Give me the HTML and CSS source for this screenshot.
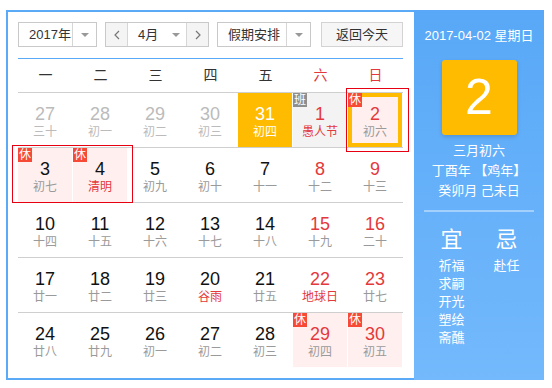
FILE: index.html
```html
<!DOCTYPE html>
<html lang="zh-CN">
<head>
    <meta charset="UTF-8">
    <title>万年历</title>
    <link rel="stylesheet" href="styles.css">
</head>
<body>
    <div class="calendar">
        <div class="main">
            <div class="toolbar">
                <div class="select year">
                    <span class="value">2017年</span>
                    <span class="arrow"><i class="caret"></i></span>
                </div>
                <div class="select month">
                    <span class="nav prev">
                        <svg width="6" height="10" viewBox="0 0 6 10"><path d="M5 1 L1 5 L5 9" fill="none" stroke="#777" stroke-width="1.2"/></svg>
                    </span>
                    <span class="value">4月</span>
                    <span class="caret-box"><i class="caret"></i></span>
                    <span class="nav next">
                        <svg width="6" height="10" viewBox="0 0 6 10"><path d="M1 1 L5 5 L1 9" fill="none" stroke="#777" stroke-width="1.2"/></svg>
                    </span>
                </div>
                <div class="select holiday">
                    <span class="value">假期安排</span>
                    <span class="arrow"><i class="caret"></i></span>
                </div>
                <div class="today-btn">返回今天</div>
            </div>
            <div class="divider"></div>

            <div class="week-head">
                <span>一</span><span>二</span><span>三</span><span>四</span><span>五</span>
                <span class="red">六</span><span class="red">日</span>
            </div>

            <div class="row">
                <div class="day other"><div class="num">27</div><div class="lunar">三十</div></div>
                <div class="day other"><div class="num">28</div><div class="lunar">初一</div></div>
                <div class="day other"><div class="num">29</div><div class="lunar">初二</div></div>
                <div class="day other"><div class="num">30</div><div class="lunar">初三</div></div>
                <div class="day picked"><div class="num">31</div><div class="lunar">初四</div></div>
                <div class="day work"><span class="badge gray">班</span><div class="num red">1</div><div class="lunar red">愚人节</div></div>
                <div class="day rest today"><span class="badge">休</span><div class="num red">2</div><div class="lunar">初六</div></div>
            </div>
            <div class="row">
                <div class="day rest"><span class="badge">休</span><div class="num">3</div><div class="lunar">初七</div></div>
                <div class="day rest"><span class="badge">休</span><div class="num">4</div><div class="lunar red">清明</div></div>
                <div class="day"><div class="num">5</div><div class="lunar">初九</div></div>
                <div class="day"><div class="num">6</div><div class="lunar">初十</div></div>
                <div class="day"><div class="num">7</div><div class="lunar">十一</div></div>
                <div class="day"><div class="num red">8</div><div class="lunar">十二</div></div>
                <div class="day"><div class="num red">9</div><div class="lunar">十三</div></div>
            </div>
            <div class="row">
                <div class="day"><div class="num">10</div><div class="lunar">十四</div></div>
                <div class="day"><div class="num">11</div><div class="lunar">十五</div></div>
                <div class="day"><div class="num">12</div><div class="lunar">十六</div></div>
                <div class="day"><div class="num">13</div><div class="lunar">十七</div></div>
                <div class="day"><div class="num">14</div><div class="lunar">十八</div></div>
                <div class="day"><div class="num red">15</div><div class="lunar">十九</div></div>
                <div class="day"><div class="num red">16</div><div class="lunar">二十</div></div>
            </div>
            <div class="row">
                <div class="day"><div class="num">17</div><div class="lunar">廿一</div></div>
                <div class="day"><div class="num">18</div><div class="lunar">廿二</div></div>
                <div class="day"><div class="num">19</div><div class="lunar">廿三</div></div>
                <div class="day"><div class="num">20</div><div class="lunar red">谷雨</div></div>
                <div class="day"><div class="num">21</div><div class="lunar">廿五</div></div>
                <div class="day"><div class="num red">22</div><div class="lunar red">地球日</div></div>
                <div class="day"><div class="num red">23</div><div class="lunar">廿七</div></div>
            </div>
            <div class="row">
                <div class="day"><div class="num">24</div><div class="lunar">廿八</div></div>
                <div class="day"><div class="num">25</div><div class="lunar">廿九</div></div>
                <div class="day"><div class="num">26</div><div class="lunar">初一</div></div>
                <div class="day"><div class="num">27</div><div class="lunar">初二</div></div>
                <div class="day"><div class="num">28</div><div class="lunar">初三</div></div>
                <div class="day rest"><span class="badge">休</span><div class="num red">29</div><div class="lunar">初四</div></div>
                <div class="day rest"><span class="badge">休</span><div class="num red">30</div><div class="lunar">初五</div></div>
            </div>
        </div>

        <div class="side">
            <div class="today-date">2017-04-02 星期日</div>
            <div class="big-day">2</div>
            <div class="lunar-info">
                <div>三月初六</div>
                <div>丁酉年 【鸡年】</div>
                <div>癸卯月 己未日</div>
            </div>
            <div class="side-line"></div>
            <div class="yiji">
                <div class="col">
                    <div class="title">宜</div>
                    <div>祈福</div>
                    <div>求嗣</div>
                    <div>开光</div>
                    <div>塑绘</div>
                    <div>斋醮</div>
                </div>
                <div class="col">
                    <div class="title">忌</div>
                    <div>赴任</div>
                </div>
            </div>
        </div>

        <!-- highlight outlines -->
        <div class="mark mark-today"></div>
        <div class="mark mark-holiday"></div>
    </div>
</body>
</html>
```

FILE: styles.css
```css
body {
    margin: 0;
    font-family: "Liberation Sans", "Noto Sans CJK SC", sans-serif;
    color: #333;
    background: #fff;
}

.calendar {
    position: relative;
    display: flex;
    width: 538px;
    height: 370px;
    margin: 10px 0 0 6px;
}

.main {
    box-sizing: border-box;
    width: 408px;
    border: 2px solid #5aaaf8;
    border-right: none;
    padding: 10px 11px 0 10px;
}

/* top controls */
.toolbar {
    display: flex;
    height: 25px;
    font-size: 13px;
}

.select {
    display: flex;
    box-sizing: border-box;
    height: 25px;
    border: 1px solid #c9c9c9;
    line-height: 23px;
    color: #333;
    margin-right: 8px;
}

.select .value {
    padding-left: 10px;
}

.select .arrow {
    width: 23px;
    border-left: 1px solid #d6d6d6;
    display: flex;
    align-items: center;
    justify-content: center;
}

.caret {
    width: 0;
    height: 0;
    border-top: 4px solid #999;
    border-left: 4px solid transparent;
    border-right: 4px solid transparent;
}

.year .value {
    width: 43px;
}

.month {
    width: 104px;
}

.month .nav {
    flex: none;
    width: 21px;
    background: #f4f4f4;
    display: flex;
    align-items: center;
    justify-content: center;
}

.month .prev {
    border-right: 1px solid #d6d6d6;
}

.month .next {
    border-left: 1px solid #d6d6d6;
}

.month .value {
    width: 28px;
}

.month .caret-box {
    width: 21px;
    display: flex;
    align-items: center;
    justify-content: center;
}

.holiday {
    margin-right: 10px;
}

.holiday .value {
    width: 58px;
}

.today-btn {
    box-sizing: border-box;
    width: 82px;
    height: 25px;
    line-height: 23px;
    text-align: center;
    border: 1px solid #d3d3d3;
    background: #f6f6f6;
    color: #333;
}

.divider {
    height: 1px;
    margin-top: 11px;
    background: #5aaaf8;
}

/* grid */
.week-head {
    display: grid;
    grid-template-columns: repeat(7, 55px);
    height: 33px;
    line-height: 33px;
    text-align: center;
    font-size: 14px;
    color: #333;
}

.red {
    color: #e4393c !important;
}

.row {
    display: grid;
    grid-template-columns: repeat(7, 55px);
    border-top: 1px solid #cfcfcf;
}

.day {
    position: relative;
    box-sizing: border-box;
    width: 54px;
    height: 54px;
    padding-top: 11px;
    text-align: center;
}

.num {
    font-size: 18px;
    line-height: 20px;
    color: #111;
}

.lunar {
    font-size: 12px;
    line-height: 16px;
    color: #9a9a9a;
}

.other .num,
.other .lunar {
    color: #bbb;
}

.picked {
    background: #ffbb00;
}

.picked .num,
.picked .lunar {
    color: #fff;
}

.work {
    background: #f3f3f3;
}

.rest {
    background: #fff0ef;
}

.today {
    border: 4px solid #ffbb00;
    padding-top: 7px;
}

.badge {
    position: absolute;
    top: 0;
    left: 0;
    width: 14px;
    height: 14px;
    line-height: 14px;
    font-size: 12px;
    color: #fff;
    background: #f64a37;
}

.badge.gray {
    background: #8e8e8e;
}

.today .badge {
    top: -4px;
    left: -4px;
}

/* right panel */
.side {
    width: 130px;
    background: linear-gradient(to bottom, #58a8f7, #73b9fc);
    color: #fff;
    text-align: center;
}

.today-date {
    padding-top: 17px;
    font-size: 13px;
    line-height: 18px;
}

.big-day {
    width: 75px;
    height: 75px;
    margin: 15px auto 0;
    border-radius: 3px;
    background: #ffbb00;
    box-shadow: 0 2px 4px rgba(0, 0, 0, 0.15);
    font-size: 50px;
    line-height: 75px;
}

.lunar-info {
    margin-top: 6px;
    font-size: 13px;
    line-height: 20px;
}

.side-line {
    height: 2px;
    margin: 9px 10px 0;
    background: rgba(255, 255, 255, 0.4);
}

.yiji {
    display: flex;
    justify-content: center;
    margin-top: 15px;
    font-size: 13px;
    line-height: 18px;
}

.yiji .col {
    width: 55px;
}

.yiji .title {
    font-size: 22px;
    line-height: 26px;
    margin-bottom: 4px;
}

/* red outlines drawn over the grid */
.mark {
    position: absolute;
    box-sizing: border-box;
    border: 1px solid #e60012;
}

.mark-today {
    left: 340px;
    top: 78px;
    width: 63px;
    height: 64px;
}

.mark-holiday {
    left: 6px;
    top: 135px;
    width: 121px;
    height: 58px;
}
```
